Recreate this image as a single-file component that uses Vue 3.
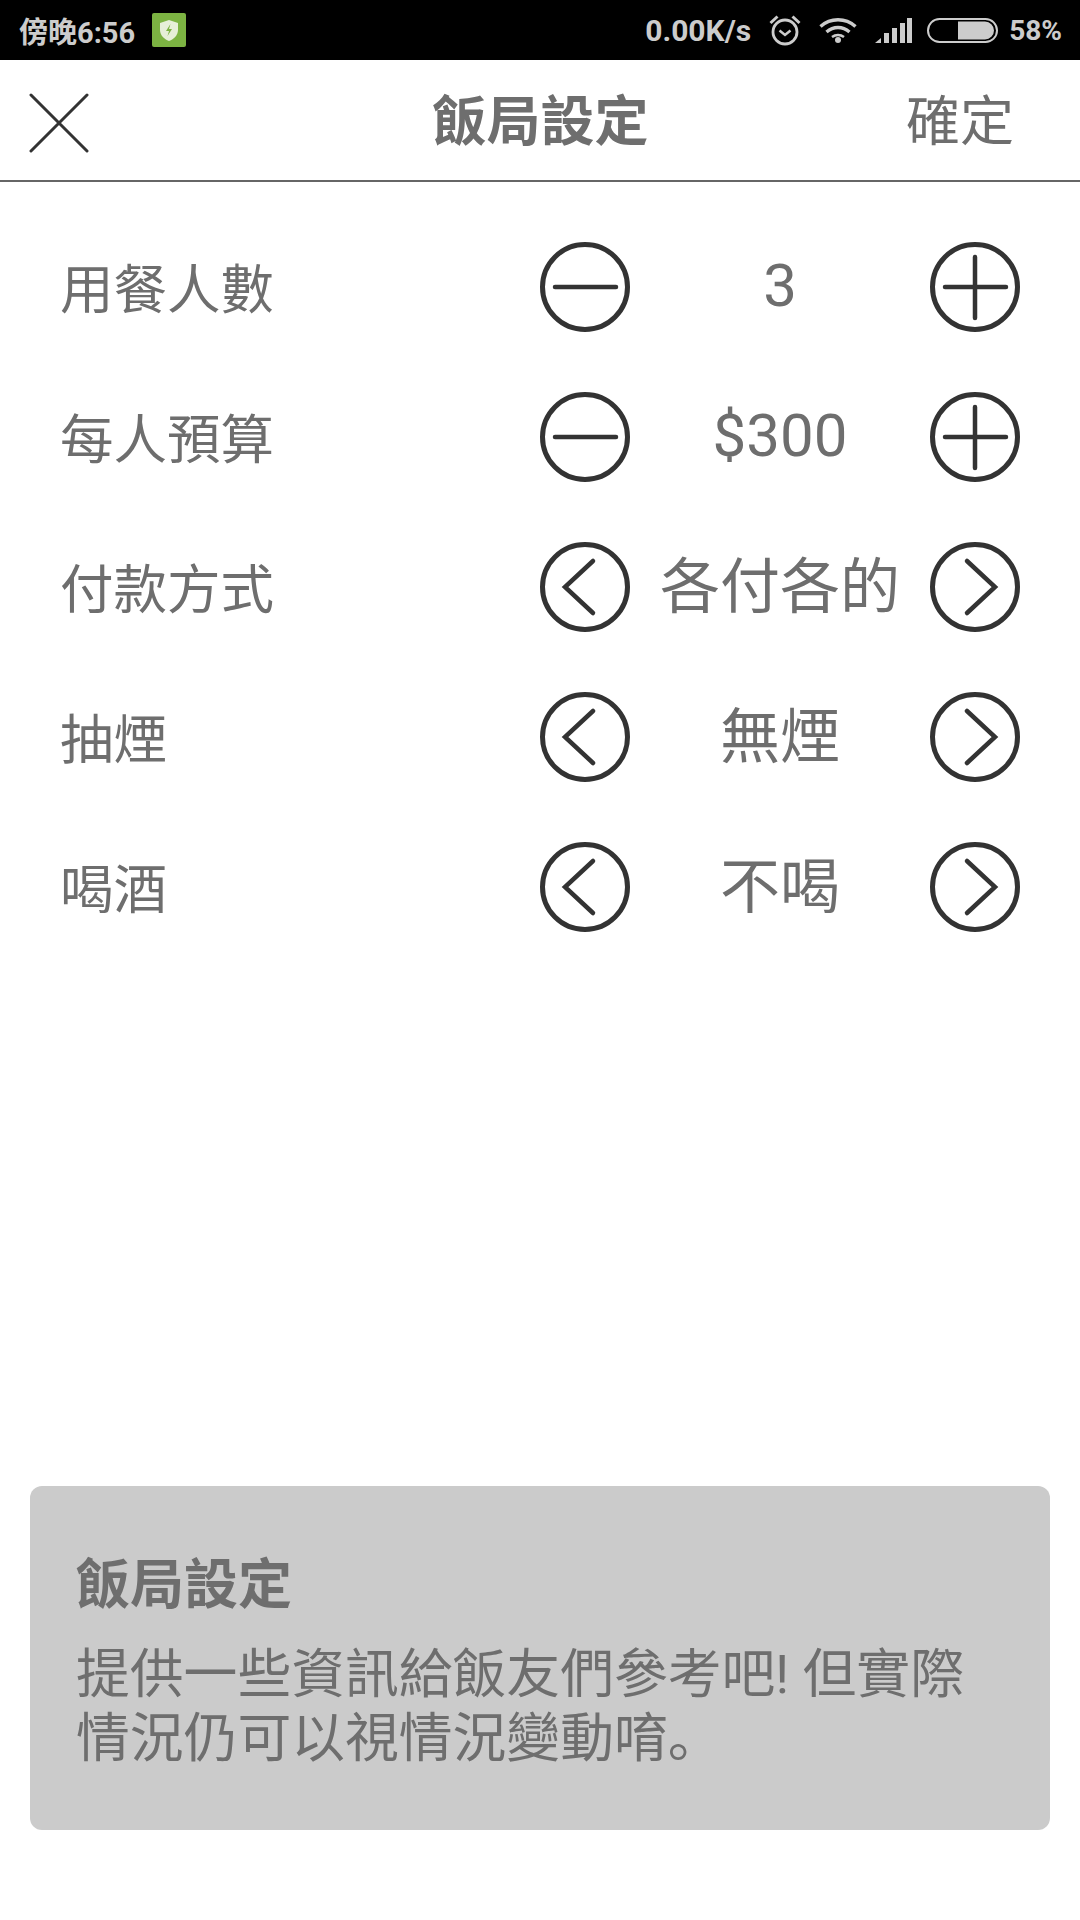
<template>
  <div class="page">
    <div class="status-bar">
      <div class="status-left">
        <span class="clock">傍晚6:56</span>
        <svg class="shield" width="34" height="34" viewBox="0 0 34 34">
          <rect width="34" height="34" rx="2" fill="#7cb342" />
          <path d="M17 7l9 3v7c0 5-4 9-9 11-5-2-9-6-9-11v-7z" fill="#e6efd8" />
          <path d="M18.500 11l-4.500 7h3l-1.500 5 4.500-7h-3z" fill="#7cb342" />
        </svg>
      </div>
      <div class="status-right">
        <span class="speed">0.00K/s</span>
        <svg class="alarm" width="32" height="31" viewBox="0 0 32 31" fill="none" stroke="#ccc">
          <circle cx="16" cy="17" r="12" stroke-width="2.800" />
          <path d="M10.500 15.500l5.500 4.500 5.500-4.500" stroke-width="2.500" />
          <path d="M1.500 8l7-6.500M30.500 8l-7-6.500" stroke-width="3" />
        </svg>
        <svg class="wifi" width="38" height="25" viewBox="0 0 38 25" fill="none" stroke="#ccc" stroke-width="3.400">
          <path d="M1.500 8.500c10-9 25-9 35 0" />
          <path d="M7.500 14c7-6 16-6 23 0" />
          <path d="M13 19c3.500-2.500 8.500-2.500 12 0" stroke-width="2.600" />
          <circle cx="19" cy="22" r="3" fill="#ccc" stroke="none" />
        </svg>
        <svg class="signal" width="37" height="25" viewBox="0 0 37 25" fill="#ccc">
          <path d="M0 25l6-5v5z" />
          <rect x="9" y="15" width="5" height="10" />
          <rect x="17" y="10" width="5" height="15" />
          <rect x="25" y="5" width="5" height="20" />
          <rect x="32" y="0" width="5" height="25" />
        </svg>
        <svg class="battery" width="71" height="25" viewBox="0 0 71 25">
          <rect x="1" y="1" width="69" height="23" rx="11.500" fill="none" stroke="#ccc" stroke-width="2" />
          <path d="M31 3.500h27a9 9 0 0 1 0 18h-27z" fill="#ccc" />
        </svg>
        <span class="percent">58%</span>
      </div>
    </div>

    <header class="top-bar">
      <button class="close" aria-label="close">
        <svg width="60" height="60" viewBox="0 0 60 60" stroke="#333" stroke-width="3" stroke-linecap="round">
          <path d="M2 2l56 56M58 2l-56 56" />
        </svg>
      </button>
      <h1 class="title">飯局設定</h1>
      <span class="confirm">確定</span>
    </header>

    <div class="settings">
      <div v-for="row in rows" :key="row.label" class="row">
        <span class="label">{{ row.label }}</span>
        <svg class="round-btn" width="90" height="90" viewBox="0 0 90 90">
          <circle cx="45" cy="45" r="42.500" />
          <path v-if="row.kind === 'step'" d="M15 45h61" />
          <path v-else d="M53 19l-28 26 28 26" />
        </svg>
        <span class="value" :class="row.kind">{{ row.value }}</span>
        <svg class="round-btn" width="90" height="90" viewBox="0 0 90 90">
          <circle cx="45" cy="45" r="42.500" />
          <path v-if="row.kind === 'step'" d="M15 45h61M45 15v61" />
          <path v-else d="M37 19l28 26-28 26" />
        </svg>
      </div>
    </div>

    <div class="note">
      <h2 class="note-title">飯局設定</h2>
      <p class="note-text">提供一些資訊給飯友們參考吧! 但實際情況仍可以視情況變動唷。</p>
    </div>
  </div>
</template>

<script setup>
const rows = [
  { label: '用餐人數', value: '3', kind: 'step' },
  { label: '每人預算', value: '$300', kind: 'step' },
  { label: '付款方式', value: '各付各的', kind: 'pick' },
  { label: '抽煙', value: '無煙', kind: 'pick' },
  { label: '喝酒', value: '不喝', kind: 'pick' },
]
</script>

<style>
html,
body {
  margin: 0;
  background: #fff;
}
</style>

<style scoped>
.page {
  width: 1080px;
  height: 1920px;
  display: flex;
  flex-direction: column;
  overflow: hidden;
  background: #fff;
  color: #6e6e6e;
  font-family: Roboto, "Noto Sans CJK SC", sans-serif;
}

.status-bar {
  height: 60px;
  flex: none;
  box-sizing: border-box;
  background: #000;
  color: #ccc;
  display: flex;
  align-items: center;
  justify-content: space-between;
  padding: 0 18px 0 19px;
  font-size: 29px;
  font-weight: 700;
}

.status-left,
.status-right {
  display: flex;
  align-items: center;
}

.shield {
  margin-left: 17px;
}

.speed {
  font-size: 30px;
}

.alarm,
.wifi,
.signal {
  margin-left: 18px;
}

.battery {
  margin-left: 15px;
}

.percent {
  margin-left: 11px;
  font-size: 28px;
}

.top-bar {
  height: 122px;
  flex: none;
  box-sizing: border-box;
  border-bottom: 2px solid #666;
  display: grid;
  grid-template-columns: 1fr auto 1fr;
  align-items: center;
  padding: 5px 28px 0 29px;
}

.close {
  justify-self: start;
  padding: 0;
  border: 0;
  background: none;
  display: flex;
}

.title {
  margin: 0;
  font-size: 54px;
  font-weight: 700;
  line-height: 1;
}

.confirm {
  justify-self: end;
  margin-right: 38px;
  font-size: 54px;
  line-height: 1;
}

.settings {
  padding: 60px 60px 0;
  display: flex;
  flex-direction: column;
  gap: 60px;
}

.row {
  display: grid;
  grid-template-columns: 480px 90px 300px 90px;
  align-items: center;
  height: 90px;
}

.label {
  padding-top: 7px;
  font-size: 53.500px;
  line-height: 1;
}

.value {
  text-align: center;
  font-size: 60px;
  line-height: 1;
}

.value.step {
  padding-bottom: 2px;
}

.value.pick {
  padding-top: 2px;
}

.round-btn {
  fill: none;
  stroke: #333;
  stroke-width: 5;
  stroke-linecap: round;
  stroke-linejoin: miter;
}

.round-btn path {
  stroke-width: 4.500;
}

.note {
  margin: auto 30px 90px;
  height: 344px;
  box-sizing: border-box;
  padding: 68px 46px 0;
  background: #cbcbcb;
  border-radius: 12px;
}

.note-title {
  margin: 0;
  font-size: 54px;
  font-weight: 700;
  line-height: 64px;
}

.note-text {
  margin: 25px 0 0;
  font-size: 53.800px;
  line-height: 64px;
}
</style>
